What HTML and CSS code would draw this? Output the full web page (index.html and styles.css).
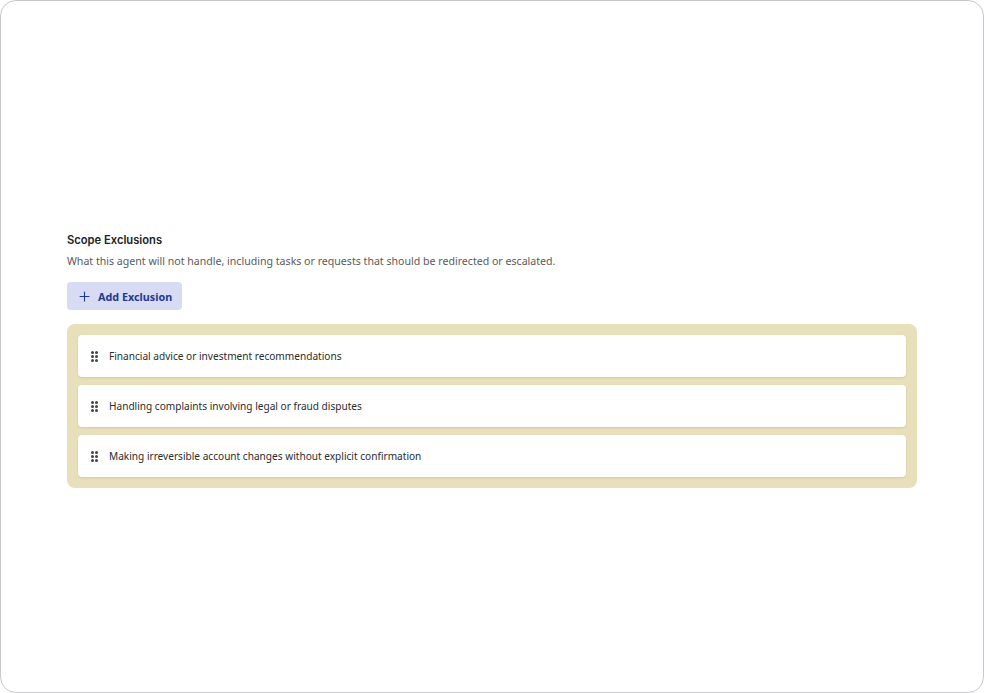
FILE: index.html
```html
<!DOCTYPE html>
<html lang="en">
<head>
    <meta charset="UTF-8">
    <meta name="viewport" content="width=device-width, initial-scale=1.0">
    <title>Scope Exclusions</title>
    <link rel="stylesheet" href="styles.css">
</head>
<body>
    <div class="frame">
        <section class="section">
            <h2>Scope Exclusions</h2>
            <p class="hint">What this agent will not handle, including tasks or requests that should be redirected or escalated.</p>

            <button class="add-button">
                <svg viewBox="0 0 16 16" fill="none" stroke="currentColor" stroke-width="1.4">
                    <path d="M8 2v12M2 8h12"/>
                </svg>
                Add Exclusion
            </button>

            <div class="list">
                <div class="item">
                    <span class="grip"><i></i><i></i><i></i><i></i><i></i><i></i></span>
                    Financial advice or investment recommendations
                </div>
                <div class="item">
                    <span class="grip"><i></i><i></i><i></i><i></i><i></i><i></i></span>
                    Handling complaints involving legal or fraud disputes
                </div>
                <div class="item">
                    <span class="grip"><i></i><i></i><i></i><i></i><i></i><i></i></span>
                    Making irreversible account changes without explicit confirmation
                </div>
            </div>
        </section>
    </div>
</body>
</html>
```

FILE: styles.css
```css
* {
    margin: 0;
    padding: 0;
    box-sizing: border-box;
}

html, body {
    height: 100%;
}

body {
    font-family: "Noto Sans", "Open Sans", sans-serif;
    background: #ffffff;
    color: #2b2b2b;
}

.frame {
    height: 100%;
    border: 1.5px solid #c9c9cc;
    border-radius: 16px;
    background: #ffffff;
    padding: 231px 66px 0 66px;
}

h2 {
    font-family: Inter, "Noto Sans", sans-serif;
    font-size: 11.2px;
    font-weight: 600;
    color: #222222;
    line-height: 17px;
}

.hint {
    margin-top: 5px;
    font-size: 10.6px;
    line-height: 15px;
    color: #5a5a5a;
}

.add-button {
    margin-top: 13px;
    display: flex;
    align-items: center;
    gap: 7px;
    height: 28px;
    padding: 0 10px 0 11px;
    border: none;
    border-radius: 4px;
    background: #d8dbf4;
    color: #233a8e;
    font-family: "Noto Sans", sans-serif;
    font-size: 10.8px;
    font-weight: 700;
    cursor: pointer;
}

.add-button svg {
    width: 13px;
    height: 13px;
}

.list {
    margin-top: 14px;
    background: #e8dfbb;
    border-radius: 8px;
    padding: 11px;
    display: flex;
    flex-direction: column;
    gap: 8px;
}

.item {
    display: flex;
    align-items: center;
    height: 42px;
    padding: 0 13px;
    gap: 11px;
    background: #ffffff;
    border-radius: 4px;
    box-shadow: 0 1px 2px rgba(120, 100, 40, 0.18);
    font-size: 10.1px;
    color: #2b2b2b;
}

.grip {
    display: grid;
    grid-template-columns: 3px 3px;
    grid-auto-rows: 3px;
    gap: 1px;
}

.grip i {
    display: block;
    width: 3px;
    height: 3px;
    border-radius: 50%;
    background: #444444;
}
```
